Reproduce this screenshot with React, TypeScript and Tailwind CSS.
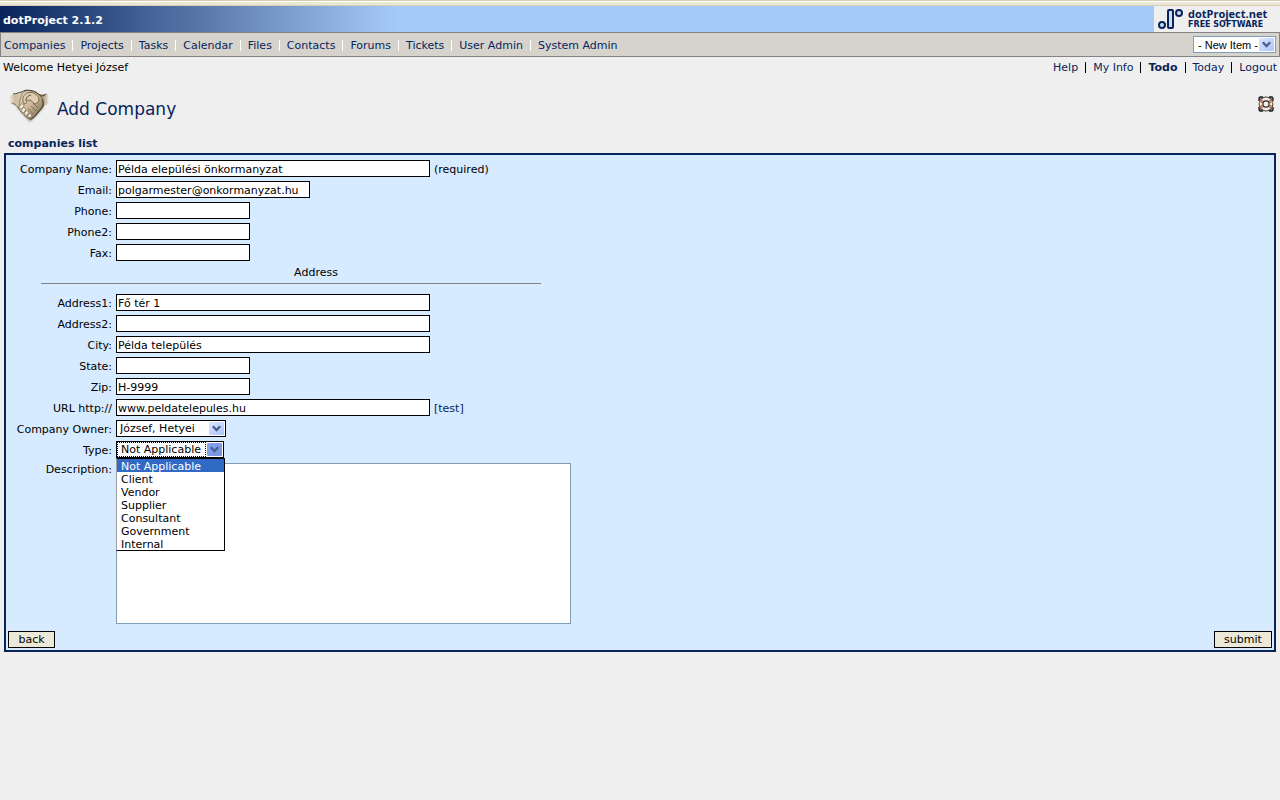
import type { ReactNode } from 'react';

const modules = ['Companies', 'Projects', 'Tasks', 'Calendar', 'Files', 'Contacts', 'Forums', 'Tickets', 'User Admin', 'System Admin'];
const userLinks = ['Help', 'My Info', 'Todo', 'Today', 'Logout'];
const companyTypes = ['Not Applicable', 'Client', 'Vendor', 'Supplier', 'Consultant', 'Government', 'Internal'];

type Field = { id: string; label: string; value?: string; width: string; after?: ReactNode };

const LONG = 'w-[314px]';
const MEDIUM = 'w-[194px]';
const SHORT = 'w-[134px]';

const contactFields: Field[] = [
  { id: 'name', label: 'Company Name:', value: 'Példa elepülési önkormanyzat', width: LONG, after: '(required)' },
  { id: 'email', label: 'Email:', value: 'polgarmester@onkormanyzat.hu', width: MEDIUM },
  { id: 'phone', label: 'Phone:', width: SHORT },
  { id: 'phone2', label: 'Phone2:', width: SHORT },
  { id: 'fax', label: 'Fax:', width: SHORT },
];

const addressFields: Field[] = [
  { id: 'address1', label: 'Address1:', value: 'Fő tér 1', width: LONG },
  { id: 'address2', label: 'Address2:', width: LONG },
  { id: 'city', label: 'City:', value: 'Példa település', width: LONG },
  { id: 'state', label: 'State:', width: SHORT },
  { id: 'zip', label: 'Zip:', value: 'H-9999', width: SHORT },
  {
    id: 'url',
    label: 'URL http://',
    value: 'www.peldatelepules.hu',
    width: LONG,
    after: <a href="#test" className="text-[#08245b]">[test]</a>,
  },
];

function Row({ id, label, children }: { id: string; label: string; children: ReactNode }) {
  return (
    <div className="grid h-[17px] grid-cols-[106px_1fr] gap-x-1">
      <label htmlFor={id} className="whitespace-nowrap text-right leading-[19px]">{label}</label>
      <div className="flex items-start gap-1 leading-[19px]">{children}</div>
    </div>
  );
}

function TextRow({ field }: { field: Field }) {
  return (
    <Row id={field.id} label={field.label}>
      <input
        id={field.id}
        type="text"
        defaultValue={field.value ?? ''}
        className={`h-[17px] border border-black bg-white px-px pt-px leading-[14px] outline-none ${field.width}`}
      />
      {field.after && <span>{field.after}</span>}
    </Row>
  );
}

function Arrow({ active = false }: { active?: boolean }) {
  return (
    <svg
      aria-hidden="true"
      viewBox="0 0 15 13"
      className="pointer-events-none absolute right-0.5 top-0.5 h-[13px] w-[15px]"
    >
      <defs>
        <linearGradient id={active ? 'arrowActive' : 'arrowIdle'} x1="0" y1="0" x2="1" y2="1">
          <stop offset="0" stopColor={active ? '#8ba5ee' : '#dce6fe'} />
          <stop offset="1" stopColor={active ? '#7391e0' : '#adc3fa'} />
        </linearGradient>
      </defs>
      <rect width="15" height="13" rx="1" fill={active ? 'url(#arrowActive)' : 'url(#arrowIdle)'} />
      <path d="M3.8 4.3 L7.5 8 L11.2 4.3" fill="none" stroke="#46608c" strokeWidth="2.3" />
    </svg>
  );
}

function ProjectLogo() {
  return (
    <a href="#dotproject" className="flex h-[26px] w-[126px] items-center gap-1 bg-[#efefef] pl-1 text-[#08245b]">
      <svg aria-hidden="true" viewBox="0 0 26 22" className="h-[22px] w-[26px] shrink-0">
        <g fill="#cddcf1" stroke="#08245b" strokeWidth="2">
          <circle cx="4" cy="17" r="3" />
          <rect x="10" y="2" width="5" height="18" rx="1" />
          <circle cx="21" cy="5" r="3" />
        </g>
      </svg>
      <span className="flex flex-col whitespace-nowrap font-bold">
        <span className="font-['Open_Sans','Noto_Sans',sans-serif] text-[11px] leading-[11px]">dotProject.net</span>
        <span className="text-[8px] leading-[11px]">FREE SOFTWARE</span>
      </span>
    </a>
  );
}

function Handshake() {
  return (
    <svg aria-hidden="true" viewBox="0 0 42 34" className="h-[34px] w-[42px] shrink-0">
      <defs>
        <linearGradient id="cuffLeft" x1="0" x2="1">
          <stop offset="0" stopColor="#c9b594" stopOpacity="0" />
          <stop offset="0.35" stopColor="#cfbc9c" />
          <stop offset="1" stopColor="#e6d8c0" />
        </linearGradient>
        <linearGradient id="cuffRight" x1="0" x2="1">
          <stop offset="0" stopColor="#c4ae8c" />
          <stop offset="0.65" stopColor="#b39e7e" />
          <stop offset="1" stopColor="#a18b6a" stopOpacity="0" />
        </linearGradient>
        <linearGradient id="palm" x1="0" y1="0" x2="1" y2="1">
          <stop offset="0" stopColor="#ecdfca" />
          <stop offset="0.5" stopColor="#cdb896" />
          <stop offset="1" stopColor="#64563f" />
        </linearGradient>
        <filter id="handShadow" x="-20%" y="-20%" width="140%" height="140%">
          <feGaussianBlur stdDeviation="1.1" />
        </filter>
      </defs>
      <path d="M8 17 L22 33 L36 18 Z" fill="#4a4640" opacity="0.5" filter="url(#handShadow)" />
      <path d="M1 6 C5 6 9 5 13 4 L18 3 L19 15 L11 19 C8 16 5 15 1 15 Z" fill="url(#cuffLeft)" />
      <path d="M24 3 L29 4 C33 6 37 5 41 4 L41 15 C38 15 36 17 34 20 L27 20 Z" fill="url(#cuffRight)" />
      <path d="M14 5 C16 2 20 1 23 2 C28 2 30 5 33 8 C36 12 36 16 33 20 C29 24 27 29 22 30 C18 29 14 25 11 20 C11 15 12 9 14 5 Z" fill="url(#palm)" stroke="#6d5e47" strokeWidth="0.7" />
      <path d="M5 5 C9 5 11 3 14 3 C16 1 20 0.8 23 1.6 C27 2 29 4 33 7 C35 7 37 6 38 5" fill="none" stroke="#453a29" strokeWidth="1" />
      <path d="M15 12 C14 8 17 4 21 3.5 C26 3 30 6 31 10 C31 13 29 15 26 15 C25 13 23 11 21 11 C19 11 19 14 17 15 C15 15 15 13 15 12 Z" fill="#dfcdae" stroke="#5e5039" strokeWidth="0.8" />
      <path d="M23 6 C19 7 18 9 18 12" fill="none" stroke="#453a29" strokeWidth="0.9" />
      <path d="M26 15 L30 19 M23 17 L28 22 M20 19 L25 25" fill="none" stroke="#6d5e47" strokeWidth="0.7" />
      <path d="M34 10 C36 14 36 17 33 20 C29 24 27 29 22 30.5" fill="none" stroke="#453a29" strokeWidth="1.3" opacity="0.75" />
      <g fill="#f3e9d7" stroke="#6d5e47" strokeWidth="0.6">
        <ellipse cx="13.5" cy="17.5" rx="2" ry="2.8" transform="rotate(38 13.5 17.5)" />
        <ellipse cx="15.5" cy="21" rx="1.9" ry="2.7" transform="rotate(38 15.5 21)" />
        <ellipse cx="18.5" cy="24" rx="1.8" ry="2.6" transform="rotate(38 18.5 24)" />
        <ellipse cx="21.8" cy="26.6" rx="1.7" ry="2.2" transform="rotate(38 21.8 26.6)" />
      </g>
      <path d="M4 14 C7 15 9 17 10.5 19.5" fill="none" stroke="#6f6049" strokeWidth="0.9" />
    </svg>
  );
}

function LifeRing() {
  return (
    <svg aria-hidden="true" viewBox="0 0 16 16" className="block size-4">
      <path d="M1 5V2L2 1H5 M11 1H14L15 2V5 M15 11V14L14 15H11 M5 15H2L1 14V11" fill="#8c8c8c" stroke="#1e1e1e" strokeWidth="1.3" />
      <circle cx="8" cy="8" r="7.4" fill="#4a403d" />
      <circle cx="8" cy="8" r="6.4" fill="#f3ebe6" />
      <g fill="none" stroke="#dc7355" strokeWidth="2.2">
        <path d="M3.2 7 A5 5 0 0 1 4.8 4.2" />
        <path d="M11.2 4.2 A5 5 0 0 1 12.8 7" />
        <path d="M12.8 9 A5 5 0 0 1 11.2 11.8" />
        <path d="M4.8 11.8 A5 5 0 0 1 3.2 9" />
      </g>
      <circle cx="8" cy="8" r="3.1" fill="#efefef" stroke="#2b2b2b" strokeWidth="1.2" />
    </svg>
  );
}

export default function App() {
  return (
    <div className="min-h-screen bg-[#efefef] font-['DejaVu_Sans',Verdana,sans-serif] text-[11px] leading-[13px] text-black">
      <div className="h-1.5 border-y border-[#d6ceb4] bg-[#ebe7d6]">
        <div className="h-px bg-white" />
      </div>

      <header className="flex h-[26px] items-center justify-between bg-[#a6caf7] bg-[linear-gradient(to_right,#08245b,#a6caf7_397px)]">
        <a href="#home" className="pl-[3px] pt-0.5 font-bold text-white">dotProject 2.1.2</a>
        <ProjectLogo />
      </header>

      <div className="flex h-[25px] items-center justify-between border border-[#848284] bg-[#d5d3cc] px-[3px]">
        <nav className="flex items-center gap-[7px] whitespace-nowrap pt-px text-[#08245b]">
          {modules.map((name, i) => (
            <div key={name} className="flex items-center gap-[7px]">
              {i > 0 && <span className="h-[11px] w-px bg-white" />}
              <a href={`#${name}`}>{name}</a>
            </div>
          ))}
        </nav>
        <div className="relative">
          <select
            aria-label="New item"
            className="block h-[17px] w-[83px] appearance-none border border-[#7f9db9] bg-white pl-1 pt-px font-['Liberation_Sans',Arial,sans-serif] text-[11px] leading-[14px] outline-none"
          >
            <option>- New Item -</option>
          </select>
          <Arrow />
        </div>
      </div>

      <div className="flex h-5 items-center justify-between px-[3px]">
        <span>Welcome Hetyei József</span>
        <div className="flex items-center gap-[7px] whitespace-nowrap">
          {userLinks.map((name, i) => (
            <div key={name} className="flex items-center gap-[7px]">
              {i > 0 && <span className="h-[11px] w-px bg-black" />}
              <a href={`#${name}`} className={name === 'Todo' ? 'font-bold text-[#08245b]' : 'text-[#08245b]'}>{name}</a>
            </div>
          ))}
        </div>
      </div>

      <main className="px-1 pt-3">
        <div className="flex h-[34px] items-center justify-between pl-1 pr-0.5">
          <div className="flex items-center gap-[7px]">
            <Handshake />
            <h1 className="pt-1.5 text-[17px] leading-5 text-[#08245b]">Add Company</h1>
          </div>
          <a href="#help" aria-label="Help" className="pb-1"><LifeRing /></a>
        </div>
        <div className="flex h-[30px] items-end pb-[3px] pl-1">
          <a href="#companies" className="font-bold text-[#08245b]">companies list</a>
        </div>

        <form className="border-2 border-[#08245b] bg-[#d6ebff] pt-[5px]">
          <div className="flex flex-col gap-1">
            {contactFields.map((f) => <TextRow key={f.id} field={f} />)}

            <div className="ml-[35px] w-[500px] pb-1.5">
              <h2 className="border-b border-[#848284] pb-0.5 pl-[50px] text-center leading-[16px]">Address</h2>
            </div>

            {addressFields.map((f) => <TextRow key={f.id} field={f} />)}

            <Row id="owner" label="Company Owner:">
              <div className="relative">
                <select id="owner" className="block h-[17px] w-[110px] appearance-none border border-black bg-white pl-[3px] pt-px leading-[14px] outline-none">
                  <option>József, Hetyei</option>
                </select>
                <Arrow />
              </div>
            </Row>

            <Row id="type" label="Type:">
              <div className="relative">
                <select id="type" className="block h-[17px] w-[108px] appearance-none border border-black bg-white pl-1 pt-px leading-[14px] outline-none">
                  {companyTypes.map((t) => <option key={t}>{t}</option>)}
                </select>
                <span className="pointer-events-none absolute inset-y-px left-px right-[18px] border border-dotted border-black" />
                <Arrow active />
                <ul role="listbox" aria-label="Type" className="absolute left-0 top-[17px] z-10 w-[109px] border border-black border-l-[#a0a0a0] bg-white">
                  {companyTypes.map((t, i) => (
                    <li
                      key={t}
                      role="option"
                      aria-selected={i === 0}
                      className={i === 0 ? 'h-[13px] bg-[#316ac5] pl-1 leading-[15px] text-white' : 'h-[13px] pl-1 leading-[15px]'}
                    >
                      {t}
                    </li>
                  ))}
                </ul>
              </div>
            </Row>

            <div className="grid grid-cols-[106px_1fr] gap-x-1 pt-px">
              <label htmlFor="description" className="text-right">Description:</label>
              <textarea id="description" className="block h-[161px] w-[455px] resize-none border border-[#7f9db9] bg-white outline-none" />
            </div>
          </div>

          <div className="flex justify-between px-0.5 pb-0.5 pt-[7px]">
            <button type="button" className="h-[17px] w-[47px] border border-black bg-[#ece9d8] pt-px leading-[14px]">back</button>
            <button type="submit" className="h-[17px] w-[58px] border border-black bg-[#ece9d8] pt-px leading-[14px]">submit</button>
          </div>
        </form>
      </main>
    </div>
  );
}
